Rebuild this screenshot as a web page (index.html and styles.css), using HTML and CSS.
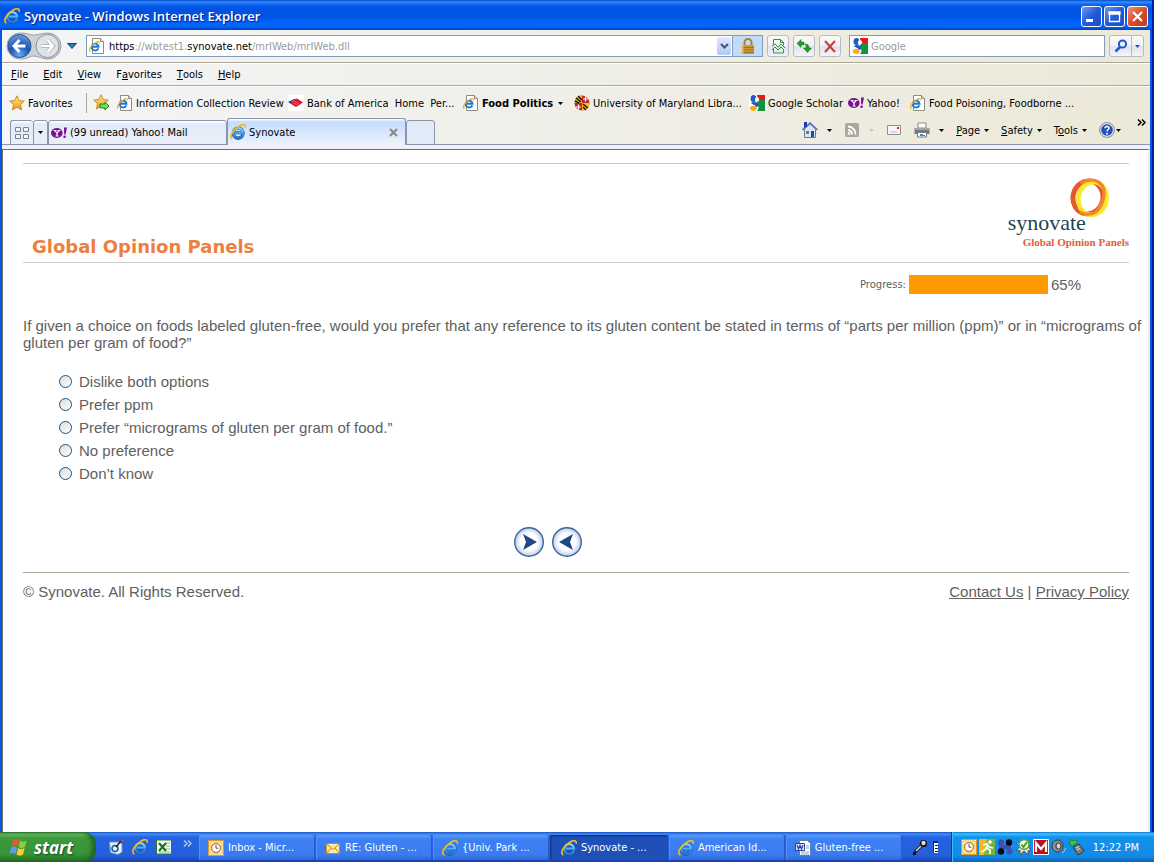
FILE: index.html
```html
<!DOCTYPE html>
<html lang="en">
<head>
    <meta charset="UTF-8">
    <title>Synovate - Windows Internet Explorer</title>
    <meta name="viewport" content="width=device-width, initial-scale=1.0">
    <link rel="stylesheet" href="styles.css">
</head>
<body>
    <!-- shared icons -->
    <svg class="sprite" aria-hidden="true">
        <defs>
            <linearGradient id="eBlue" x1="0" y1="0" x2="0" y2="1">
                <stop offset="0" stop-color="#7fdcff"/>
                <stop offset="1" stop-color="#1c78dc"/>
            </linearGradient>
            <linearGradient id="starGold" x1="0" y1="0" x2="0" y2="1">
                <stop offset="0" stop-color="#fff2a0"/>
                <stop offset="1" stop-color="#f0960a"/>
            </linearGradient>
            <radialGradient id="backBlue" cx="0.5" cy="0.9" r="0.9">
                <stop offset="0" stop-color="#5fb0f5"/>
                <stop offset="0.5" stop-color="#1c55b0"/>
                <stop offset="1" stop-color="#6f9be0"/>
            </radialGradient>
            <radialGradient id="navBall">
                <stop offset="0.6" stop-color="#ffffff"/>
                <stop offset="1" stop-color="#b9cbe6"/>
            </radialGradient>
        </defs>
        <symbol id="ie" viewBox="0 0 16 16">
            <path d="M13 10.600A5 5 0 1 1 13.200 8.600H5" fill="none" stroke="#0f4fa8" stroke-width="3.200"/>
            <path d="M13 10.600A5 5 0 1 1 13.200 8.600H5" fill="none" stroke="url(#eBlue)" stroke-width="2.200"/>
            <path d="M2.400 15C-1.500 13.500 2.500 6 8.500 2.400 12.500 0 16 0 15 3.800" fill="none" stroke="#f5b81c" stroke-width="1.700"/>
        </symbol>
        <symbol id="iepage" viewBox="0 0 16 16">
            <path d="M3.500 .5h8l3 3v12h-11z" fill="#fff" stroke="#8c8c84"/>
            <path d="M11.500 .5v3h3" fill="#e4e4de" stroke="#8c8c84"/>
            <path d="M9.300 10.300A3.400 3.400 0 1 1 9.500 8.700H3.500" fill="none" stroke="#1a78d8" stroke-width="1.900"/>
            <path d="M1.200 13.600C-.8 12 2.500 7 6 5 9 3.200 11 3.400 10.600 5.400" fill="none" stroke="#efb122" stroke-width="1.300"/>
        </symbol>
        <symbol id="star" viewBox="0 0 16 16">
            <path d="M8 .8l2.100 4.800 5.200.5-3.900 3.500 1.200 5.300L8 12.200l-4.600 2.700 1.200-5.300L.7 6.100l5.200-.5z" fill="url(#starGold)" stroke="#cf8a17"/>
        </symbol>
        <symbol id="yahoo" viewBox="0 0 16 16">
            <ellipse cx="5.800" cy="8" rx="5.800" ry="5" fill="#7b0f97"/>
            <path d="M2.500 5.500h3M6.500 5.500h3M4 5.700l2 2.600 2-2.600M6 8v3M4.600 11h3" fill="none" stroke="#fff" stroke-width="1.200"/>
            <path d="M13 2.500h3l-1.400 7h-1.400z" fill="#7b0f97"/>
            <circle cx="13.600" cy="11.800" r="1.300" fill="#7b0f97"/>
        </symbol>
        <symbol id="google" viewBox="0 0 16 16">
            <path d="M0 0h16v16H0z" fill="#fff"/>
            <path d="M8 0h8v5h-7z" fill="#e8171b"/>
            <path d="M10 5h6v11H8c3-3 1-6-1-8z" fill="#11923e"/>
            <ellipse cx="4.500" cy="3.500" rx="3" ry="3.500" fill="#1d5cc4"/>
            <path d="M4 7c4 0 5 1 6 4l-3 1C6 9 3 10 2 8z" fill="#1d5cc4"/>
            <ellipse cx="4.300" cy="13.300" rx="3.400" ry="2.600" fill="#f3ae12"/>
            <circle cx="8" cy="4.400" r="2.100" fill="#fff"/>
        </symbol>
        <symbol id="clock" viewBox="0 0 16 16">
            <path d="M.5 .5h15v15H.5z" fill="#fdf3d6" stroke="#e09a28"/>
            <path d="M2 2h12v12H2z" fill="none" stroke="#f0be5c"/>
            <circle cx="8" cy="8" r="4.500" fill="#fff" stroke="#c7842c" stroke-width="1.400"/>
            <path d="M8 5v3.200h2.400" fill="none" stroke="#555"/>
        </symbol>
        <symbol id="caret" viewBox="0 0 5 3">
            <path d="M0 0h5L2.500 3z" fill="currentColor"/>
        </symbol>
        <symbol id="chevrons" viewBox="0 0 9 7">
            <path d="M1 .5l3 3-3 3M5 .5l3 3-3 3" fill="none" stroke="currentColor" stroke-width="1.500"/>
        </symbol>
    </svg>

    <div class="window">
        <header class="titlebar">
            <svg class="icon"><use href="#ie"/></svg>
            <span class="title">Synovate - Windows Internet Explorer</span>
            <div class="window-buttons">
                <button aria-label="Minimize"><svg viewBox="0 0 19 19"><path d="M4 12h7v3H4z" fill="#fff"/></svg></button>
                <button aria-label="Maximize"><svg viewBox="0 0 19 19"><path d="M4.500 5.500h10v9h-10zM4 5h11v2H4z" fill="none" stroke="#fff" stroke-width="1.300"/></svg></button>
                <button class="close" aria-label="Close"><svg viewBox="0 0 19 19"><path d="M5 5l9 9M14 5l-9 9" stroke="#fff" stroke-width="2.200"/></svg></button>
            </div>
        </header>

        <div class="chrome">
            <div class="nav-row">
                <div class="history">
                    <svg viewBox="0 0 56 28">
                        <path d="M14 1C22 1 24 3 28 3S36 1 42 1a13 13 0 0 1 0 26c-6 0-10-3-14-3s-6 3-14 3A13 13 0 0 1 14 1z" fill="#cdd1d6" stroke="#9da1a6"/>
                        <circle cx="13.500" cy="14" r="11.500" fill="url(#backBlue)" stroke="#2b4f92"/>
                        <path d="M19.500 14H8M13.500 8L8 14l5.500 6" fill="none" stroke="#fff" stroke-width="3"/>
                        <circle cx="41.500" cy="14" r="11.500" fill="#dfe3e9" stroke="#8d9299"/>
                        <path d="M35.500 14H47M41.500 8l5.500 6-5.500 6" fill="none" stroke="#9ea5ae" stroke-width="4"/>
                        <path d="M35.500 14H47M41.500 8l5.500 6-5.500 6" fill="none" stroke="#fff" stroke-width="2.600"/>
                    </svg>
                    <button aria-label="Back"></button>
                    <button aria-label="Forward"></button>
                </div>
                <button class="recent" aria-label="Recent pages"><svg viewBox="0 0 10 7"><path d="M.5 .5h9L5 5.500z" fill="#2580b5" stroke="#144a7c"/></svg></button>
                <div class="address">
                    <svg class="icon"><use href="#iepage"/></svg>
                    <div class="url" role="textbox" aria-label="Address" contenteditable="true" spellcheck="false">https<i>://wbtest1.</i>synovate.net<i>/mrIWeb/mrIWeb.dll</i></div>
                    <button class="drop" aria-label="Show addresses"><svg viewBox="0 0 13 16"><path d="M3 6l3.500 3.500L10 6" fill="none" stroke="#3c5584" stroke-width="2"/></svg></button>
                    <button class="lock" aria-label="Security report">
                        <svg class="icon" viewBox="0 0 16 16"><path d="M4.500 8V4.500a3.500 3.500 0 0 1 7 0V8" fill="none" stroke="#a9822c" stroke-width="2"/><path d="M2 7h12v9H2z" fill="#cf9a2c"/><path d="M2 9.500h12M2 12h12M2 14.500h12" stroke="#a47218"/><path d="M3 7v9" stroke="#f0cd74"/></svg>
                    </button>
                </div>
                <button class="tool" aria-label="Compatibility view"><svg class="icon" viewBox="0 0 16 16"><path d="M3.500 6.500v-5h7l3 3v3M3.500 11v4h10v-4M10.500 1.500v3h3" fill="none" stroke="#2f9a35"/><path d="M2 8l3-2 3 3 3-3 4 4M2 12l3-3 3 3 3-3 3 3" fill="none" stroke="#2f9a35"/></svg></button>
                <button class="tool" aria-label="Refresh"><svg class="icon" viewBox="0 0 16 16"><path d="M1 5.500l4-4V4h3v3H5v2.500zM15.500 10l-4 4.500L7.500 10H10c0-2 0-3-1-4 3 0 4 1.500 4 4z" fill="#219a2c" stroke="#127019" stroke-width=".5"/></svg></button>
                <button class="tool" aria-label="Stop"><svg class="icon" viewBox="0 0 16 16"><path d="M3 3l10 11M13 3L3 14" stroke="#c83a40" stroke-width="2"/></svg></button>
                <div class="search">
                    <svg class="icon"><use href="#google"/></svg>
                    <input type="text" placeholder="Google" aria-label="Search">
                </div>
                <div class="search-buttons">
                    <button aria-label="Search"><svg class="icon" viewBox="0 0 16 16"><circle cx="9.500" cy="6" r="3.600" fill="#e8f4ff" stroke="#1d57d2" stroke-width="2"/><path d="M7 9l-4.500 4.500" stroke="#1d57d2" stroke-width="2.500"/></svg></button>
                    <button class="narrow" aria-label="Search options"><svg class="caret blue"><use href="#caret"/></svg></button>
                </div>
            </div>

            <nav class="menu-row">
                <button><u>F</u>ile</button>
                <button><u>E</u>dit</button>
                <button><u>V</u>iew</button>
                <button>F<u>a</u>vorites</button>
                <button><u>T</u>ools</button>
                <button><u>H</u>elp</button>
            </nav>

            <div class="favorites-row">
                <button class="favorites"><svg class="icon"><use href="#star"/></svg>Favorites</button>
                <button class="add" aria-label="Add to Favorites bar"><svg viewBox="0 0 18 18"><use href="#star" width="16" height="16"/><path d="M7 10h5V8l4 4-4 4v-2H7z" fill="#7ed957" stroke="#1e8a24"/></svg></button>
                <div class="links">
                    <a href="#"><svg class="icon"><use href="#iepage"/></svg>Information Collection Review</a>
                    <a href="#"><svg class="icon" viewBox="0 0 16 16"><path d="M0 0h16v16H0z" fill="#fff"/><path d="M0 7l6-3 3 2-6 3z" fill="#1b3da8"/><path d="M5 4.500l4-1 6 4-7 4.500-5-3z" fill="#e3172b"/><path d="M3 6l6 4M5 5l6 4" stroke="#f7a5ad" stroke-width=".5"/></svg>Bank of America&nbsp; Home&nbsp; Per...</a>
                    <a href="#" class="folder"><svg class="icon"><use href="#iepage"/></svg>Food Politics<svg class="caret"><use href="#caret"/></svg></a>
                    <a href="#"><svg class="icon" viewBox="0 0 16 16"><circle cx="8" cy="8" r="7.500" fill="#c2252c"/><path d="M8 8V.5A7.500 7.500 0 0 0 .5 8zM8 8v7.500A7.500 7.500 0 0 0 15.500 8z" fill="#f1c21b"/><path d="M2 3l5 4M4 1l4 4M9 9l5 4M9 12l3 3M1 6l4 2" stroke="#1a1208" stroke-width="1.600"/><path d="M11.500 1.500v5M9 4h5M4.500 9.500v5M2 12h5" stroke="#fff" stroke-width="1.200"/></svg>University of Maryland Libra...</a>
                    <a href="#"><svg class="icon"><use href="#google"/></svg>Google Scholar</a>
                    <a href="#"><svg class="icon"><use href="#yahoo"/></svg>Yahoo!</a>
                    <a href="#"><svg class="icon"><use href="#iepage"/></svg>Food Poisoning, Foodborne ...</a>
                </div>
            </div>

            <div class="tab-row">
                <div class="tabs">
                    <button class="tab quick" aria-label="Quick tabs"><svg class="icon" viewBox="0 0 16 16"><path d="M1.500 2.500h5v4h-5zM9.500 2.500h5v4h-5zM1.500 9.500h5v4h-5zM9.500 9.500h5v4h-5z" fill="#f4f5fa" stroke="#7f8296"/></svg></button>
                    <button class="tab list" aria-label="Tab list"><svg class="caret"><use href="#caret"/></svg></button>
                    <button class="tab page-tab"><svg class="icon"><use href="#yahoo"/></svg>(99 unread) Yahoo! Mail</button>
                    <button class="tab page-tab active"><svg class="icon"><use href="#ie"/></svg>Synovate<svg class="tab-close" viewBox="0 0 9 9"><path d="M1 1l7 7M8 1L1 8" stroke="#8b8b8b" stroke-width="2.200"/></svg></button>
                    <button class="tab new" aria-label="New tab"></button>
                </div>
                <div class="commands">
                    <button aria-label="Home"><svg class="icon" viewBox="0 0 16 16"><path d="M2.500 7v8.500h11V7L8 2z" fill="#dce6f4" stroke="#6a7ca6"/><path d="M.5 8L8 1l7.500 7" fill="none" stroke="#5c78b4" stroke-width="1.600"/><path d="M2 0h3v4L2 6z" fill="#2036c8"/><path d="M9 9h3v6H9z" fill="#1c4d96"/><path d="M4 9h3v3H4z" fill="#777"/></svg><svg class="caret"><use href="#caret"/></svg></button>
                    <button class="faded" aria-label="Feeds"><svg class="icon" viewBox="0 0 16 16"><rect x="1" y="1" width="14" height="14" rx="2" fill="#a9a89f"/><path d="M4 4.500A7.500 7.500 0 0 1 11.500 12.500M4 8a4.500 4.500 0 0 1 4 4.500" fill="none" stroke="#fff" stroke-width="1.800"/><circle cx="5" cy="11.500" r="1.400" fill="#fff"/></svg><svg class="caret"><use href="#caret"/></svg></button>
                    <button aria-label="Read mail"><svg class="icon" viewBox="0 0 16 16"><path d="M1.500 3.500h13v9h-13z" fill="#f5f5f5" stroke="#8f8f96"/><path d="M11 5h2v2h-2z" fill="#d8232a"/><path d="M4 10h7" stroke="#b9b9c0"/></svg></button>
                    <button aria-label="Print"><svg class="icon" viewBox="0 0 16 16"><path d="M4 1h8v5H4z" fill="#fff" stroke="#888"/><path d="M.5 6h15v6H.5z" fill="#77797c"/><path d="M1 7h14" stroke="#b4b6b9" stroke-width="1.500"/><path d="M3.500 10.500h9v4.500h-9z" fill="#fff" stroke="#777"/><path d="M6 12h3v2H6z" fill="#2f8be0"/><path d="M9 13h2v1H9z" fill="#36a33a"/></svg><svg class="caret"><use href="#caret"/></svg></button>
                    <button><span><u>P</u>age</span><svg class="caret"><use href="#caret"/></svg></button>
                    <button><span><u>S</u>afety</span><svg class="caret"><use href="#caret"/></svg></button>
                    <button><span>T<u>o</u>ols</span><svg class="caret"><use href="#caret"/></svg></button>
                    <button class="help" aria-label="Help"><svg class="icon" viewBox="0 0 16 16"><circle cx="8" cy="8" r="7.400" fill="#dfe4ee" stroke="#83888f"/><circle cx="8" cy="8" r="5.800" fill="#2450b4"/><path d="M6 6.300c0-2.600 4.200-2.400 4 0C9.900 7.800 8 7.700 8 9.500" fill="none" stroke="#fff" stroke-width="1.500"/><circle cx="8" cy="11.700" r="1" fill="#fff"/></svg><svg class="caret"><use href="#caret"/></svg></button>
                    <button class="more" aria-label="More"><svg class="chevrons"><use href="#chevrons"/></svg></button>
                </div>
            </div>
        </div>

        <main class="page">
            <div class="banner">
                <h1>Global Opinion Panels</h1>
                <div class="logo">
                    <svg viewBox="0 0 42 40">
                        <ellipse cx="19" cy="19.500" rx="15" ry="16.500" fill="none" stroke="#e8562b" stroke-width="5" transform="rotate(12 19 19.500)"/>
                        <ellipse cx="23.500" cy="20.500" rx="14" ry="16.500" fill="none" stroke="#fbe92e" stroke-width="4.600" transform="rotate(12 23.500 20.500)"/>
                        <path d="M12 5.500C19 0 30 1 34 9c3 7 0 18-7 25" fill="none" stroke="#f08a28" stroke-width="3.200"/>
                        <path d="M11 34c5 3 11 3 16 0" fill="none" stroke="#f08a28" stroke-width="3.200"/>
                    </svg>
                    <span class="brand">synovate</span>
                    <span class="sub">Global Opinion Panels</span>
                </div>
            </div>

            <div class="progress">
                <span class="progress-label">Progress:</span>
                <div class="bar"></div>
                <span>65%</span>
            </div>

            <form class="survey">
                <p>If given a choice on foods labeled gluten-free, would you prefer that any reference to its gluten content be stated in terms of “parts per million (ppm)” or in “micrograms of gluten per gram of food?”</p>
                <div class="options">
                    <label><input type="radio" name="pref">Dislike both options</label>
                    <label><input type="radio" name="pref">Prefer ppm</label>
                    <label><input type="radio" name="pref">Prefer “micrograms of gluten per gram of food.”</label>
                    <label><input type="radio" name="pref">No preference</label>
                    <label><input type="radio" name="pref">Don’t know</label>
                </div>
                <div class="steps">
                    <button type="button" aria-label="Next"><svg viewBox="0 0 30 30"><circle cx="15" cy="15" r="14.300" fill="url(#navBall)" stroke="#3c659c" stroke-width="1.400"/><path d="M9 7l14 8-14 8 3-8z" fill="#1d4a85"/></svg></button>
                    <button type="button" aria-label="Previous"><svg viewBox="0 0 30 30"><circle cx="15" cy="15" r="14.300" fill="url(#navBall)" stroke="#3c659c" stroke-width="1.400"/><path d="M21 7L7 15l14 8-3-8z" fill="#1d4a85"/></svg></button>
                </div>
            </form>

            <footer class="legal">
                <span>© Synovate. All Rights Reserved.</span>
                <span><a href="#">Contact Us</a> | <a href="#">Privacy Policy</a></span>
            </footer>
        </main>
    </div>

    <div class="taskbar">
        <button class="start">
            <svg viewBox="0 0 20 20"><path d="M4 3c2-1.500 4-1.500 6 0L8.500 9.500c-2-1.500-4-1.500-6 0z" fill="#f0562a"/><path d="M11 3.500c2 1.500 4 1.500 6.500 0L16 10c-2.500 1.500-4.500 1.500-6.500 0z" fill="#8bd03c"/><path d="M2.200 10.500c2-1.500 4-1.500 6 0L6.500 17c-2-1.500-4-1.500-6 0z" fill="#5c9cf2"/><path d="M9.200 11c2 1.500 4 1.500 6.500 0L14 17.500c-2.500 1.500-4.500 1.500-6.500 0z" fill="#fccb2d"/></svg>
            start
        </button>
        <div class="quick-launch">
            <button aria-label="Show desktop"><svg class="icon" viewBox="0 0 16 16"><path d="M1.500 3h10l2.500 2v8l-4 2.500-7.500-2z" fill="#e9f3fc" stroke="#5d9bd0"/><circle cx="7" cy="9.500" r="3" fill="none" stroke="#1a5da8" stroke-width="1.600"/><path d="M8 8l5-6" stroke="#222" stroke-width="1.600"/><path d="M13 .5l2 2" stroke="#e33" stroke-width="2"/></svg></button>
            <button aria-label="Internet Explorer"><svg class="icon"><use href="#ie"/></svg></button>
            <button aria-label="Excel"><svg class="icon" viewBox="0 0 16 16"><path d="M.5 1h15v14H.5z" fill="#f3fbf1" stroke="#2e7a34"/><path d="M10 4h4M10 7h4M10 10h4M3 13h11" stroke="#8cba8c"/><path d="M3 4l7 8M10 4l-7 8" stroke="#1d6e28" stroke-width="2.200"/></svg></button>
            <svg class="chevrons"><use href="#chevrons"/></svg>
        </div>
        <div class="tasks">
            <button><svg class="icon"><use href="#clock"/></svg>Inbox - Micr...</button>
            <button><svg class="icon" viewBox="0 0 16 16"><path d="M1.500 3.500h13v10h-13z" fill="#fdeaa0" stroke="#c98d23"/><path d="M2 4l6 5.500L14 4M2 13l4-5M14 13l-4-5" fill="none" stroke="#b98228"/></svg>RE: Gluten - ...</button>
            <button><svg class="icon"><use href="#ie"/></svg>{Univ. Park ...</button>
            <button class="active"><svg class="icon"><use href="#ie"/></svg>Synovate - ...</button>
            <button><svg class="icon"><use href="#ie"/></svg>American Id...</button>
            <button><svg class="icon" viewBox="0 0 16 16"><path d="M4.500 .5h8l3 3v12h-11z" fill="#fff" stroke="#5f7fb4"/><path d="M11 6h3M11 8h3M6 12h8M6 14h8" stroke="#8aa4d0"/><path d="M.5 3.500h9v7h-9z" fill="#e8effb" stroke="#24479c"/><path d="M2 5l1.500 4L5 5.500 6.500 9 8 5" fill="none" stroke="#24479c" stroke-width="1.300"/></svg>Gluten-free ...</button>
        </div>
        <div class="language">
            <svg class="icon" viewBox="0 0 16 16"><path d="M1 14.500h3M3 13l7-7" stroke="#111" stroke-width="3"/><path d="M4 12l6-6" stroke="#ddd" stroke-width="1.400"/><circle cx="11.500" cy="4.500" r="3.600" fill="#111"/><circle cx="11.500" cy="4" r="2.200" fill="#ddd"/></svg>
            <svg class="lang-bar" viewBox="0 0 5 16"><path d="M0 2h5v12H0z" fill="#fff"/><path d="M0 2h5v2H0zM0 4h1v10H0z" fill="#0b2b84"/><path d="M2 6.500h3M2 9.500h3M2 12.500h3" stroke="#222"/></svg>
        </div>
        <div class="tray">
            <svg class="icon"><use href="#clock"/></svg>
            <svg class="icon" viewBox="0 0 16 16"><path d="M0 0h16v16H0z" fill="#f0b920"/><path d="M8 0h8v16H5z" fill="#75b63c"/><circle cx="11" cy="3" r="1.800" fill="#fff"/><path d="M4 6l4-1 2 3 4 1M9 6l-3 5-4 2M7 9l4 2v4" fill="none" stroke="#fff" stroke-width="1.800"/></svg>
            <svg class="icon" viewBox="0 0 16 16"><path d="M4 4v4h8v4" fill="none" stroke="#3d4fb5" stroke-width="4"/><circle cx="4" cy="3.500" r="3" fill="#3d4fb5"/><circle cx="12" cy="3.500" r="3.200" fill="#05060e"/><circle cx="4" cy="12.500" r="3.200" fill="#05060e"/><circle cx="12.500" cy="12.500" r="3" fill="#3d4fb5"/></svg>
            <svg class="icon" viewBox="0 0 16 16"><path d="M1 4l4 4-4 3 4 .5V16l4-4 4 4v-4l3-1-3-3" fill="#ddd" stroke="#555"/><circle cx="9" cy="5.500" r="4.800" fill="#f7fff4" stroke="#5ea93c" stroke-width="1.400"/><path d="M6.500 5.500l2 2.500L12 3" fill="none" stroke="#38a51e" stroke-width="2"/></svg>
            <svg class="icon" viewBox="0 0 16 16"><path d="M.5 .5h15v15H.5z" fill="#b90f22" stroke="#fff"/><path d="M3 13V4l5 6 5-6v9" fill="none" stroke="#fff" stroke-width="2.200"/></svg>
            <svg class="icon" viewBox="0 0 16 16"><ellipse cx="6.500" cy="7" rx="5.500" ry="6" fill="#8b8f95" stroke="#34383e"/><ellipse cx="7.500" cy="7" rx="2.600" ry="3.200" fill="#cfd2d6" stroke="#222"/><path d="M11 14c2-1 3-3 3.500-5" fill="none" stroke="#b7d4fa"/></svg>
            <svg class="icon" viewBox="0 0 16 16"><path d="M4 8l6-3 5 7-6 4z" fill="#7a7e84" stroke="#333"/><path d="M7 9l3-1.500M8 11l3-1.500" stroke="#e0e4e8"/><path d="M1 6V0l2 2 5-1v3L5 5l1 2z" fill="#42c935" stroke="#17781b" stroke-width=".7"/></svg>
            <time>12:22 PM</time>
        </div>
    </div>
</body>
</html>
```

FILE: styles.css
```css
:root {
    --ui-font: "DejaVu Sans Condensed", Roboto, sans-serif;
    --page-font: "Liberation Sans", Arial, sans-serif;
    --frame: #0b55e6;
    --rule: #aca899;
    --text: #606060;
    --input-border: #7f9db9;
}

* {
    box-sizing: border-box;
}

body {
    margin: 0;
    min-height: 100vh;
    display: flex;
    flex-direction: column;
    font-family: var(--ui-font);
    font-size: 11px;
    color: #000;
    background-color: #fff;
}

button {
    font: inherit;
    color: inherit;
    background: none;
    border: none;
    padding: 0;
    display: flex;
    align-items: center;
    justify-content: center;
    white-space: nowrap;
    cursor: pointer;
}

.sprite {
    position: absolute;
    width: 0;
    height: 0;
}

.icon {
    width: 16px;
    height: 16px;
    flex: none;
}

.caret {
    width: 5px;
    height: 3px;
    flex: none;
}

.chevrons {
    width: 9px;
    height: 7px;
    flex: none;
}

/* window frame */
.window {
    flex: 1;
    display: flex;
    flex-direction: column;
    background-color: var(--frame);
    border-left: 2px solid var(--frame);
    border-right: 2px solid #001ea0;
    padding-right: 2px;
}

.titlebar {
    height: 30px;
    margin: 0 -2px;
    padding: 2px 4px 0;
    display: flex;
    align-items: center;
    gap: 4px;
    background: linear-gradient(#0a48c8 0, #2f8dff 2px, #0b5ff0 5px, #0053e1 9px, #0055e5 16px, #0266fe 24px, #0062f5 27px, #003fc0 30px);
}

.title {
    flex: 1;
    color: #fff;
    font-family: "Open Sans", sans-serif;
    font-size: 13px;
    font-weight: 600;
    text-shadow: 1px 1px 1px #0a1883;
}

.window-buttons {
    display: flex;
    gap: 2px;
    padding-top: 1px;
}

.window-buttons button {
    width: 21px;
    height: 21px;
    border: 1px solid #fff;
    border-radius: 3px;
    background: linear-gradient(135deg, #6b9bf5, #2459d8 50%, #1c4cc4);
}

.window-buttons .close {
    background: linear-gradient(135deg, #f0937a, #dd4a26 50%, #c33a14);
}

.window-buttons svg {
    width: 19px;
    height: 19px;
}

.chrome {
    background: linear-gradient(90deg, #f4f5f7, #f0efe9 45%, #ece9d8);
}

/* address row */
.nav-row {
    height: 33px;
    padding: 0 6px 0 4px;
    display: flex;
    align-items: center;
    gap: 4px;
    border-bottom: 1px solid var(--rule);
}

.history {
    position: relative;
    width: 56px;
    height: 28px;
    display: flex;
    flex: none;
}

.history svg {
    position: absolute;
    inset: 0;
}

.history button {
    position: relative;
    flex: 1;
}

.recent {
    width: 12px;
}

.recent svg {
    width: 10px;
    height: 7px;
}

.address,
.search {
    height: 22px;
    display: flex;
    align-items: center;
    background-color: #fff;
    border: 1px solid var(--input-border);
}

.address {
    flex: 1;
    margin-left: 4px;
    padding-left: 2px;
    gap: 4px;
}

.url {
    flex: 1;
    outline: none;
    white-space: nowrap;
}

.url i {
    font-style: normal;
    color: #9b9b9b;
}

.drop {
    width: 14px;
    height: 18px;
    margin-right: -3px;
    border-radius: 2px;
    background: linear-gradient(#e1eafe, #b3c7f4);
}

.drop svg {
    width: 13px;
    height: 16px;
}

.lock {
    width: 30px;
    height: 20px;
    background-color: #c5daf8;
    border-left: 1px solid var(--input-border);
}

.tool,
.search-buttons {
    height: 22px;
    border: 1px solid #b9bbc2;
    border-radius: 3px;
    background: linear-gradient(#fafafa, #f0f1f2 50%, #dfe2ee 51%, #f4f5f6);
}

.tool {
    width: 22px;
    flex: none;
}

.tool + .search {
    margin-left: 4px;
}

.tool:hover {
    border-color: var(--input-border);
}

.search {
    width: 256px;
    padding-left: 2px;
    gap: 3px;
}

.search input {
    flex: 1;
    min-width: 0;
    border: none;
    outline: none;
    padding: 0;
    background: none;
    font: inherit;
}

.search input::placeholder {
    color: #9b9b9b;
}

.search-buttons {
    display: flex;
    width: 35px;
}

.search-buttons button {
    width: 21px;
}

.search-buttons .narrow {
    width: 12px;
    border-left: 1px solid #b9bbc2;
}

.blue {
    color: #1d57d2;
}

/* menus */
.menu-row {
    height: 23px;
    padding-left: 9px;
    display: flex;
    gap: 15px;
    border-top: 1px solid #fff;
    border-bottom: 1px solid var(--rule);
}

/* favourites */
.favorites-row {
    height: 33px;
    padding-left: 7px;
    display: flex;
    align-items: center;
    border-top: 1px solid #fff;
}

.favorites {
    width: 78px;
    height: 20px;
    gap: 3px;
    justify-content: flex-start;
    border-right: 1px solid var(--rule);
}

.add {
    width: 30px;
}

.add svg {
    width: 18px;
    height: 18px;
}

.links {
    flex: 1;
    display: grid;
    grid-template-columns: 171px 175px 111px 175px 99px 62px 1fr;
}

.links a {
    display: flex;
    align-items: center;
    gap: 3px;
    color: inherit;
    text-decoration: none;
    white-space: nowrap;
}

.links .folder {
    font-weight: bold;
}

.folder .caret {
    margin-left: 2px;
}

/* tabs */
.tab-row {
    height: 30px;
    padding-left: 8px;
    display: flex;
    justify-content: space-between;
    border-bottom: 4px solid #eef0fa;
    box-shadow: inset 0 -1px #8f93ac;
}

.tabs {
    display: flex;
    align-items: flex-end;
}

.tab {
    height: 25px;
    border: 1px solid #8f93ac;
    border-radius: 3px 3px 0 0;
    background: linear-gradient(#fff, #e1ebf8 3px, #e9eff8);
}

.quick {
    width: 23px;
    border-right: none;
}

.list {
    width: 15px;
}

.page-tab {
    width: 179px;
    padding: 0 7px 0 2px;
    gap: 3px;
    justify-content: flex-start;
}

.page-tab.active {
    height: 27px;
    border-bottom: none;
    background: linear-gradient(#fff, #c3dbfc 3px, #eef3fc);
}

.tab-close {
    width: 9px;
    height: 9px;
    margin-left: auto;
}

.new {
    width: 29px;
    background: #e0ebf8;
}

.commands {
    display: flex;
    align-items: center;
    gap: 12px;
    padding: 0 4px 4px 0;
}

.commands button {
    gap: 4px;
}

.commands .icon + .caret {
    margin-left: 5px;
}

.commands .help .caret {
    margin-left: -3px;
}

.faded .caret {
    color: #c6c4b8;
}

.more {
    align-self: flex-start;
    margin-left: 4px;
}

/* survey page */
.page {
    flex: 1;
    padding: 13px 19px 20px 20px;
    background-color: #fff;
    border: 1px solid #716f64;
    border-right: 2px solid #f1efe2;
    border-bottom: none;
    color: var(--text);
    font-family: var(--page-font);
    font-size: 15px;
    line-height: 17px;
}

.banner {
    height: 100px;
    display: flex;
    justify-content: space-between;
    align-items: flex-end;
    border-top: 1px solid #ccc;
    border-bottom: 1px solid #ccc;
}

.banner h1 {
    margin: 0;
    padding: 0 9px 4px;
    font-family: "DejaVu Sans", sans-serif;
    font-size: 18px;
    line-height: 22px;
    color: #ec8040;
}

.logo {
    display: flex;
    flex-direction: column;
    padding-bottom: 14px;
    font-family: "Liberation Serif", serif;
}

.logo svg {
    width: 42px;
    height: 40px;
    align-self: flex-end;
    margin: 0 18px -8px 0;
}

.brand {
    font-size: 22px;
    line-height: 26px;
    color: #1d4453;
}

.sub {
    padding-left: 15px;
    font-size: 11px;
    font-weight: bold;
    line-height: 12px;
    color: #de5e3e;
}

.progress {
    display: flex;
    justify-content: flex-end;
    align-items: center;
    gap: 3px;
    padding: 12px 48px 23px 0;
}

.progress-label {
    font-family: "DejaVu Sans", sans-serif;
    font-size: 10px;
}

.bar {
    width: 139px;
    height: 19px;
    background-color: #ff9900;
}

/* the question runs a little past the rules on the right */
.survey p {
    margin: 0 -18px 19px 0;
}

.options {
    padding-left: 36px;
}

.options label {
    display: flex;
    align-items: center;
    gap: 7px;
    height: 23px;
}

.options input {
    appearance: none;
    width: 13px;
    height: 13px;
    margin: 0;
    border: 1px solid #1c5180;
    border-radius: 50%;
    background: linear-gradient(135deg, #dcdcd7, #fff);
}

.options input:checked {
    background: radial-gradient(#21a121 3px, #fff 4px);
}

.steps {
    display: flex;
    justify-content: center;
    gap: 8px;
    padding: 42px 57px 15px 0;
}

.steps svg {
    width: 30px;
    height: 30px;
    display: block;
}

.legal {
    display: flex;
    justify-content: space-between;
    padding-top: 10px;
    border-top: 1px solid var(--rule);
}

.legal a {
    color: inherit;
}

/* taskbar */
.taskbar {
    height: 30px;
    display: flex;
    color: #fff;
    background: linear-gradient(#1f4fc0, #3f8cf3 2px, #2663e0 5px, #245edb 24px, #1941a5);
}

.start {
    width: 96px;
    padding-left: 9px;
    gap: 5px;
    justify-content: flex-start;
    border-radius: 0 12px 12px 0;
    background: linear-gradient(#2c7a2c, #6fc06f 2px, #3c9a3c 6px, #379537 22px, #256b25);
    box-shadow: inset -4px 0 5px #1f641f;
    font-family: "Open Sans", sans-serif;
    font-size: 17px;
    font-weight: bold;
    font-style: italic;
    text-shadow: 1px 1px 2px #143;
}

.start svg {
    width: 20px;
    height: 20px;
}

.quick-launch {
    display: flex;
    align-items: center;
    gap: 8px;
    padding: 0 7px 0 12px;
}

.quick-launch .chevrons {
    margin: 0 0 8px 3px;
    color: #a8c8fa;
}

.tasks {
    flex: 1;
    display: flex;
    gap: 1px;
    padding: 3px 0 2px;
}

.tasks button {
    flex: 1;
    min-width: 0;
    padding-left: 9px;
    gap: 4px;
    justify-content: flex-start;
    border-radius: 2px;
    background: linear-gradient(#5c9bf8, #3c81f3 4px, #3a7bf0 20px, #2f66d8);
    box-shadow: inset 1px 0 #5791f7, inset -1px 0 #265bcb;
}

.tasks .active {
    padding-left: 11px;
    background: #1e50b8;
    box-shadow: inset 1px 1px 2px #0d2f80;
}

.language {
    display: flex;
    align-items: center;
    gap: 5px;
    padding: 0 13px 0 10px;
}

.lang-bar {
    width: 5px;
    height: 16px;
    flex: none;
}

.tray {
    display: flex;
    align-items: center;
    gap: 2px;
    padding: 0 15px 0 9px;
    border-left: 1px solid #0a3a9a;
    background: linear-gradient(#1273cf, #3cc0fb 2px, #1292ea 5px, #128be6 24px, #0f62b8);
    box-shadow: inset 1px 0 #35c0fa;
}

.tray time {
    margin-left: 6px;
}
```
